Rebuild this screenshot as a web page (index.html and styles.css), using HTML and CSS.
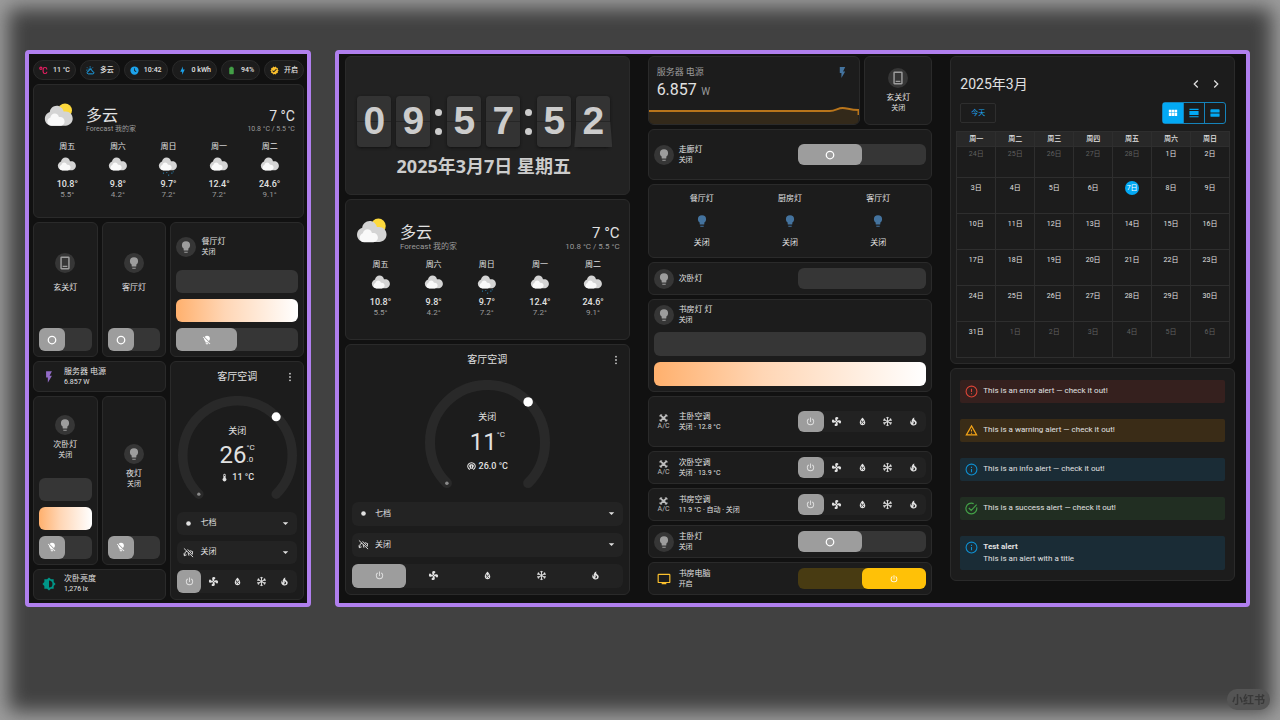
FILE: index.html
```html
<!DOCTYPE html>
<html lang="zh-CN">
<head>
<meta charset="utf-8">
<meta name="viewport" content="width=device-width, initial-scale=1">
<title>Dashboard</title>
<link rel="stylesheet" href="styles.css">
</head>
<body>
<svg class="sprite" aria-hidden="true">
  <symbol id="bulb" viewBox="0 0 24 24"><path d="M12,2A7,7 0 0,0 5,9C5,11.38 6.19,13.47 8,14.74V17A1,1 0 0,0 9,18H15A1,1 0 0,0 16,17V14.74C17.81,13.47 19,11.38 19,9A7,7 0 0,0 12,2M9,21A1,1 0 0,0 10,22H14A1,1 0 0,0 15,21V20H9V21Z"/></symbol>
  <symbol id="bulb-off" viewBox="0 0 24 24"><path d="M12,2C9.76,2 7.78,3.05 6.5,4.68L16.31,14.5C17.94,13.21 19,11.24 19,9A7,7 0 0,0 12,2M3.28,4L2,5.27L5.04,8.3C5,8.53 5,8.76 5,9C5,11.38 6.19,13.47 8,14.74V17A1,1 0 0,0 9,18H14.73L18.73,22L20,20.72L3.28,4M9,20V21A1,1 0 0,0 10,22H14A1,1 0 0,0 15,21V20H9Z"/></symbol>
  <symbol id="power" viewBox="0 0 24 24"><path d="M16.56,5.44L15.11,6.89C16.84,7.94 18,9.83 18,12A6,6 0 0,1 12,18A6,6 0 0,1 6,12C6,9.83 7.16,7.94 8.88,6.88L7.44,5.44C5.36,6.88 4,9.28 4,12A8,8 0 0,0 12,20A8,8 0 0,0 20,12C20,9.28 18.64,6.88 16.56,5.44M13,3H11V13H13"/></symbol>
  <symbol id="ring" viewBox="0 0 24 24"><circle cx="12" cy="12" r="9" fill="none" stroke="currentColor" stroke-width="3"/></symbol>
  <symbol id="fan" viewBox="0 0 24 24"><path d="M12,11A1,1 0 0,0 11,12A1,1 0 0,0 12,13A1,1 0 0,0 13,12A1,1 0 0,0 12,11M12.5,2C17,2 17.11,5.57 14.75,6.75C13.76,7.24 13.32,8.29 13.13,9.22C13.61,9.42 14.03,9.73 14.35,10.13C18.05,8.13 22.03,8.92 22.03,12.5C22.03,17 18.46,17.1 17.28,14.73C16.78,13.74 15.72,13.3 14.79,13.11C14.59,13.59 14.28,14 13.88,14.34C15.87,18.03 15.08,22 11.5,22C7,22 6.91,18.42 9.27,17.24C10.25,16.75 10.69,15.71 10.89,14.79C10.4,14.59 9.97,14.27 9.65,13.87C5.96,15.85 2,15.07 2,11.5C2,7 5.56,6.89 6.74,9.26C7.24,10.25 8.29,10.68 9.22,10.87C9.41,10.39 9.73,9.97 10.14,9.65C8.15,5.96 8.94,2 12.5,2Z"/></symbol>
  <symbol id="drop" viewBox="0 0 24 24"><path d="M12,3.25C12,3.25 6,10 6,14C6,17.32 8.69,20 12,20A6,6 0 0,0 18,14C18,10 12,3.25 12,3.25M14.47,9.97L15.53,11.03L9.53,17.03L8.47,15.97M9.75,10A1.25,1.25 0 0,1 11,11.25A1.25,1.25 0 0,1 9.75,12.5A1.25,1.25 0 0,1 8.5,11.25A1.25,1.25 0 0,1 9.75,10M14.25,14.5A1.25,1.25 0 0,1 15.5,15.75A1.25,1.25 0 0,1 14.25,17A1.25,1.25 0 0,1 13,15.75A1.25,1.25 0 0,1 14.25,14.5Z" fill-rule="evenodd"/></symbol>
  <symbol id="snow" viewBox="0 0 24 24"><g fill="none" stroke="currentColor" stroke-width="2"><path d="M12 12V2M9.500 3L12 6L14.500 3"/><path transform="rotate(60 12 12)" d="M12 12V2M9.500 3L12 6L14.500 3"/><path transform="rotate(120 12 12)" d="M12 12V2M9.500 3L12 6L14.500 3"/><path transform="rotate(180 12 12)" d="M12 12V2M9.500 3L12 6L14.500 3"/><path transform="rotate(240 12 12)" d="M12 12V2M9.500 3L12 6L14.500 3"/><path transform="rotate(300 12 12)" d="M12 12V2M9.500 3L12 6L14.500 3"/></g></symbol>
  <symbol id="fire" viewBox="0 0 24 24"><path d="M17.66 11.2C17.43 10.9 17.15 10.64 16.89 10.38C16.22 9.78 15.46 9.35 14.82 8.72C13.33 7.26 13 4.85 13.95 3C13 3.23 12.17 3.75 11.46 4.32C8.87 6.4 7.85 10.07 9.07 13.22C9.11 13.32 9.15 13.42 9.15 13.55C9.15 13.77 9 13.97 8.8 14.05C8.57 14.15 8.33 14.09 8.14 13.93C8.08 13.88 8.04 13.83 8 13.76C6.87 12.33 6.69 10.28 7.45 8.64C5.78 10 4.87 12.3 5 14.47C5.06 14.97 5.12 15.47 5.29 15.97C5.43 16.57 5.7 17.17 6 17.7C7.08 19.43 8.95 20.67 10.96 20.92C13.1 21.19 15.39 20.8 17.03 19.32C18.86 17.66 19.5 15 18.56 12.72L18.43 12.46C18.22 12 17.66 11.2 17.66 11.2M14.5 17.5C14.22 17.74 13.76 18 13.4 18.1C12.28 18.5 11.16 17.94 10.5 17.28C11.69 17 12.4 16.12 12.61 15.23C12.78 14.43 12.46 13.77 12.33 13C12.21 12.26 12.23 11.63 12.5 10.94C12.69 11.32 12.89 11.7 13.13 12C13.9 13 15.11 13.44 15.37 14.8C15.41 14.94 15.43 15.08 15.43 15.23C15.46 16.05 15.1 16.95 14.5 17.5H14.5Z"/></symbol>
  <symbol id="flash" viewBox="0 0 24 24"><path d="M7,2V13H10V22L17,10H13L17,2H7Z"/></symbol>
  <symbol id="bolt" viewBox="0 0 24 24"><path d="M11 15H6L13 1V9H18L11 23V15Z"/></symbol>
  <symbol id="tablet" viewBox="0 0 24 24"><path fill-rule="evenodd" d="M6 1H18A2 2 0 0 1 20 3V21A2 2 0 0 1 18 23H6A2 2 0 0 1 4 21V3A2 2 0 0 1 6 1M6.500 3.500V20.500H17.500V3.500M8 16.500H16V19H8Z"/></symbol>
  <symbol id="tv" viewBox="0 0 24 24"><path d="M21,17H3V5H21M21,3H3A2,2 0 0,0 1,5V17A2,2 0 0,0 3,19H8V21H16V19H21A2,2 0 0,0 23,17V5A2,2 0 0,0 21,3Z" fill-rule="evenodd"/></symbol>
  <symbol id="bright" viewBox="0 0 24 24"><path d="M12,18V6A6,6 0 0,1 18,12A6,6 0 0,1 12,18M20,15.31L23.31,12L20,8.69V4H15.31L12,0.69L8.69,4H4V8.69L0.69,12L4,15.31V20H8.69L12,23.31L15.31,20H20V15.31Z" fill-rule="evenodd"/></symbol>
  <symbol id="celsius" viewBox="0 0 24 24"><g fill="none" stroke="currentColor" stroke-width="3"><circle cx="5" cy="6" r="3"/><path d="M21 9A5 5 0 0 0 11 9V15A5 5 0 0 0 21 15"/></g></symbol>
  <symbol id="part-cloud" viewBox="0 0 24 24"><g fill="none" stroke="currentColor" stroke-width="2.600"><path d="M6 21H18A3 3 0 0 0 18 15H17A5 5 0 0 0 7 14A3.500 3.500 0 0 0 6 21ZM7 11A5 5 0 0 1 15 8.500M11 1V4M3 4L5 6M1 11H4M18 4L16 6"/></g></symbol>
  <symbol id="clock" viewBox="0 0 24 24"><path fill-rule="evenodd" d="M12 1A11 11 0 1 0 12 23A11 11 0 1 0 12 1M11 6H13V11.500L17 14L16 16L11 13Z"/></symbol>
  <symbol id="battery" viewBox="0 0 24 24"><path d="M16 4H15V2H9V4H8A2 2 0 0 0 6 6V20A2 2 0 0 0 8 22H16A2 2 0 0 0 18 20V6A2 2 0 0 0 16 4Z"/></symbol>
  <symbol id="seal" viewBox="0 0 24 24"><path fill-rule="evenodd" d="M23 12L20.560 9.220L20.900 5.540L17.290 4.720L15.400 1.540L12 3L8.600 1.540L6.710 4.720L3.100 5.530L3.440 9.210L1 12L3.440 14.780L3.100 18.470L6.710 19.290L8.600 22.470L12 21L15.400 22.460L17.290 19.280L20.900 18.460L20.560 14.780L23 12M10 17L6 13L7.410 11.590L10 14.170L16.590 7.580L18 9L10 17Z"/></symbol>
  <symbol id="thermo" viewBox="0 0 24 24"><path d="M15 13V5A3 3 0 0 0 9 5V13A5 5 0 1 0 15 13M12 4A1 1 0 0 1 13 5V8H11V5A1 1 0 0 1 12 4Z" fill-rule="evenodd"/></symbol>
  <symbol id="target" viewBox="0 0 24 24"><path d="M8 20A10 9.500 0 1 1 16 20" fill="none" stroke="currentColor" stroke-width="2.800"/><path d="M12 6A5 5 0 0 1 16 15V18H8V15A5 5 0 0 1 12 6M11 9V15H13V9Z" fill-rule="evenodd"/></symbol>
  <symbol id="dot" viewBox="0 0 24 24"><circle cx="12" cy="12" r="5"/></symbol>
  <symbol id="swing-off" viewBox="0 0 24 24"><path d="M2 3L22 22M3 19L5 11L9 9M3 19L2 14M3 19L8 17M10 5L19 15M15 8L21 10L20 17M11 12L13 19" fill="none" stroke="currentColor" stroke-width="2"/></symbol>
  <symbol id="caret" viewBox="0 0 24 24"><path d="M6 9H18L12 15Z"/></symbol>
  <symbol id="dots" viewBox="0 0 24 24"><circle cx="12" cy="4" r="2.200"/><circle cx="12" cy="12" r="2.200"/><circle cx="12" cy="20" r="2.200"/></symbol>
  <symbol id="cross-fan" viewBox="0 0 24 18"><path d="M12 9L4 2M12 9L20 2M12 9L4 16M12 9L20 16" stroke="currentColor" stroke-width="4" fill="none"/><path d="M3 5L9 1M15 1L21 5M3 13L9 17M15 17L21 13" stroke="currentColor" stroke-width="2"/></symbol>
  <symbol id="left" viewBox="0 0 24 24"><path d="M15.500 5L8.500 12L15.500 19" fill="none" stroke="currentColor" stroke-width="2.500"/></symbol>
  <symbol id="right" viewBox="0 0 24 24"><path d="M8.500 5L15.500 12L8.500 19" fill="none" stroke="currentColor" stroke-width="2.500"/></symbol>
  <symbol id="month" viewBox="0 0 24 24"><path d="M2 4H8V11H2ZM9 4H15V11H9ZM16 4H22V11H16ZM2 12H8V19H2ZM9 12H15V19H9ZM16 12H22V19H16Z"/></symbol>
  <symbol id="week" viewBox="0 0 24 24"><path d="M1 2H23V4.500H1ZM1 7H23V17H1ZM1 19.500H23V22H1Z"/></symbol>
  <symbol id="day" viewBox="0 0 24 24"><path d="M3 3H21A2 2 0 0 1 23 5V11H1V5A2 2 0 0 1 3 3M1 13H23V19A2 2 0 0 1 21 21H3A2 2 0 0 1 1 19Z"/></symbol>
  <symbol id="a-error" viewBox="0 0 24 24"><circle cx="12" cy="12" r="10" fill="none" stroke="currentColor" stroke-width="2"/><path d="M11 7H13V13H11ZM11 15H13V17H11Z"/></symbol>
  <symbol id="a-warning" viewBox="0 0 24 24"><path d="M12 3.500L21.500 20H2.500Z" fill="none" stroke="currentColor" stroke-width="2.200"/><path d="M11 10H13V14H11ZM11 16H13V18H11Z"/></symbol>
  <symbol id="a-info" viewBox="0 0 24 24"><circle cx="12" cy="12" r="10" fill="none" stroke="currentColor" stroke-width="2"/><path d="M11 7H13V9H11ZM11 11H13V17H11Z"/></symbol>
  <symbol id="a-success" viewBox="0 0 24 24"><path d="M21.500 10A10 10 0 1 1 16 3M7 11L11.500 15.500L21.500 5" fill="none" stroke="currentColor" stroke-width="2.200"/></symbol>
  <symbol id="cloud" viewBox="0 0 17 17"><path fill="#d4d4d4" d="m 3.8863,5.035 c -0.54892,0.16898 -1.04,0.46637 -1.4372,0.8636 -0.63077,0.63041 -1.0206,1.4933 -1.0206,2.455 0,1.9251 1.5589,3.4682 3.4837,3.4682 h 6.9688 c 1.9251,0 3.484,-1.5981 3.484,-3.5232 0,-1.9251 -1.5589,-3.5232 -3.484,-3.5232 h -1.0834 c -0.25294,-1.6916 -1.6986,-2.9083 -3.4463,-2.9083 -1.7995,0 -3.2805,1.4153 -3.465,3.1679"/><path fill="#f9f9f9" d="m 4.1996,7.6995 c -0.33902,0.10407 -0.64276,0.28787 -0.88794,0.5334 -0.39017,0.38982 -0.63147,0.92322 -0.63147,1.5176 0,1.1896 0.96414,2.1431 2.1537,2.1431 h 4.3071 c 1.1896,0 2.153,-0.98742 2.153,-2.1777 0,-1.1896 -0.96344,-2.1777 -2.153,-2.1777 h -0.66992 c -0.15593,-1.0449 -1.0499,-1.7974 -2.1297,-1.7974 -1.112,0 -2.0274,0.87524 -2.1417,1.9586"/></symbol>
  <symbol id="sun-cloud" viewBox="0 0 17 17"><circle cx="11.500" cy="4.200" r="3.500" fill="#fdd93c"/><use href="#cloud"/></symbol>
  <symbol id="rain-cloud" viewBox="0 0 17 17"><use href="#cloud"/><g fill="#2b8fc4"><circle cx="5" cy="14" r=".5"/><circle cx="7.600" cy="13.500" r=".4"/><circle cx="9" cy="15.500" r=".5"/><circle cx="11.500" cy="14" r=".5"/><circle cx="12.500" cy="13" r=".4"/></g></symbol>
</svg>

<main class="boards">
<section class="panel phone">
  <div class="chips">
    <span class="chip"><svg class="pink"><use href="#celsius"/></svg>11 °C</span>
    <span class="chip"><svg class="blue"><use href="#part-cloud"/></svg>多云</span>
    <span class="chip"><svg class="blue"><use href="#clock"/></svg>10:42</span>
    <span class="chip"><svg class="blue"><use href="#bolt"/></svg>0 kWh</span>
    <span class="chip"><svg class="green"><use href="#battery"/></svg>94%</span>
    <span class="chip"><svg class="amber"><use href="#seal"/></svg>开启</span>
  </div>

  <article class="card weather small">
    <header class="now">
      <svg><use href="#sun-cloud"/></svg>
      <div class="place"><h2>多云</h2><p>Forecast 我的家</p></div>
      <div class="temp"><h2>7 °C</h2><p>10.8 °C / 5.5 °C</p></div>
    </header>
    <ul class="forecast">
      <li><span>周五</span><svg><use href="#cloud"/></svg><b>10.8°</b><small>5.5°</small></li>
      <li><span>周六</span><svg><use href="#cloud"/></svg><b>9.8°</b><small>4.2°</small></li>
      <li><span>周日</span><svg><use href="#rain-cloud"/></svg><b>9.7°</b><small>7.2°</small></li>
      <li><span>周一</span><svg><use href="#cloud"/></svg><b>12.4°</b><small>7.2°</small></li>
      <li><span>周二</span><svg><use href="#cloud"/></svg><b>24.6°</b><small>9.1°</small></li>
    </ul>
  </article>

  <div class="halves">
    <div class="pair">
      <article class="card tile">
        <div class="info stacked"><span class="badge"><svg><use href="#tablet"/></svg></span><div class="text"><h3>玄关灯</h3></div></div>
        <button class="switch" role="switch" aria-checked="false" aria-label="玄关灯"><span><svg><use href="#ring"/></svg></span></button>
      </article>
      <article class="card tile">
        <div class="info stacked"><span class="badge"><svg><use href="#bulb"/></svg></span><div class="text"><h3>客厅灯</h3></div></div>
        <button class="switch" role="switch" aria-checked="false" aria-label="客厅灯"><span><svg><use href="#ring"/></svg></span></button>
      </article>
    </div>
    <article class="card tile top-tile">
      <div class="info"><span class="badge"><svg><use href="#bulb"/></svg></span><div class="text"><h3>餐厅灯</h3><p>关闭</p></div></div>
      <input type="range" class="slider" value="0" aria-label="餐厅灯亮度">
      <input type="range" class="slider warm" value="50" aria-label="餐厅灯色温">
      <button class="switch" role="switch" aria-checked="false" aria-label="餐厅灯"><span><svg><use href="#bulb-off"/></svg></span></button>
    </article>
  </div>

  <div class="halves">
    <div class="stack">
      <article class="card row"><div class="info"><span class="badge bare purple"><svg><use href="#flash"/></svg></span><div class="text"><h3>服务器 电源</h3><p>6.857 W</p></div></div></article>
      <div class="pair fill">
        <article class="card tile">
          <div class="info stacked"><span class="badge"><svg><use href="#bulb"/></svg></span><div class="text"><h3>次卧灯</h3><p>关闭</p></div></div>
          <input type="range" class="slider" value="0" aria-label="次卧灯亮度">
          <input type="range" class="slider warm" value="50" aria-label="次卧灯色温">
          <button class="switch" role="switch" aria-checked="false" aria-label="次卧灯"><span><svg><use href="#bulb-off"/></svg></span></button>
        </article>
        <article class="card tile">
          <div class="info stacked"><span class="badge"><svg><use href="#bulb"/></svg></span><div class="text"><h3>夜灯</h3><p>关闭</p></div></div>
          <button class="switch" role="switch" aria-checked="false" aria-label="夜灯"><span><svg><use href="#bulb-off"/></svg></span></button>
        </article>
      </div>
      <article class="card row"><div class="info"><span class="badge bare teal"><svg><use href="#bright"/></svg></span><div class="text"><h3>次卧亮度</h3><p>1,276 lx</p></div></div></article>
    </div>
    <article class="card climate small">
      <header><h2>客厅空调</h2><button class="more" aria-label="更多"><svg><use href="#dots"/></svg></button></header>
      <div class="dial">
        <svg class="arc" viewBox="0 0 100 87"><path d="M17.500 82.500A46 46 0 1 1 82.500 82.500"/><circle class="start" cx="17.500" cy="82.500" r="1.400"/><circle class="knob" cx="82.500" cy="17.500" r="3.800"/></svg>
        <div class="reading"><span>关闭</span><div class="big"><strong>26</strong><span class="unit"><i>°C</i><i>.0</i></span></div><p><svg><use href="#thermo"/></svg>11 °C</p></div>
      </div>
      <label class="pick"><svg><use href="#dot"/></svg><select aria-label="风速"><option>七档</option></select><svg class="caret"><use href="#caret"/></svg></label>
      <label class="pick"><svg class="wide"><use href="#swing-off"/></svg><select aria-label="摆动"><option>关闭</option></select><svg class="caret"><use href="#caret"/></svg></label>
      <div class="modes">
        <button class="on" aria-label="关闭"><svg><use href="#power"/></svg></button><button aria-label="送风"><svg><use href="#fan"/></svg></button><button aria-label="除湿"><svg><use href="#drop"/></svg></button><button aria-label="制冷"><svg><use href="#snow"/></svg></button><button aria-label="制热"><svg><use href="#fire"/></svg></button>
      </div>
    </article>
  </div>
</section>

<section class="panel desk">
  <div class="column">
    <article class="card clock">
      <div class="flip" role="timer" aria-label="09:57:52">
        <span class="digit">0</span><span class="digit">9</span><span class="colon"></span><span class="digit">5</span><span class="digit">7</span><span class="colon"></span><span class="digit">5</span><span class="digit turning">2</span>
      </div>
      <p class="date">2025年3月7日 星期五</p>
    </article>

    <article class="card weather">
      <header class="now">
        <svg><use href="#sun-cloud"/></svg>
        <div class="place"><h2>多云</h2><p>Forecast 我的家</p></div>
        <div class="temp"><h2>7 °C</h2><p>10.8 °C / 5.5 °C</p></div>
      </header>
      <ul class="forecast">
        <li><span>周五</span><svg><use href="#cloud"/></svg><b>10.8°</b><small>5.5°</small></li>
        <li><span>周六</span><svg><use href="#cloud"/></svg><b>9.8°</b><small>4.2°</small></li>
        <li><span>周日</span><svg><use href="#rain-cloud"/></svg><b>9.7°</b><small>7.2°</small></li>
        <li><span>周一</span><svg><use href="#cloud"/></svg><b>12.4°</b><small>7.2°</small></li>
        <li><span>周二</span><svg><use href="#cloud"/></svg><b>24.6°</b><small>9.1°</small></li>
      </ul>
    </article>

    <article class="card climate">
      <header><h2>客厅空调</h2><button class="more" aria-label="更多"><svg><use href="#dots"/></svg></button></header>
      <div class="dial">
        <svg class="arc" viewBox="0 0 100 87"><path d="M17.500 82.500A46 46 0 1 1 82.500 82.500"/><circle class="start" cx="17.500" cy="82.500" r="1.400"/><circle class="knob" cx="82.500" cy="17.500" r="3.800"/></svg>
        <div class="reading"><span>关闭</span><div class="big"><strong>11</strong><span class="unit"><i>°C</i></span></div><p><svg><use href="#target"/></svg>26.0 °C</p></div>
      </div>
      <label class="pick"><svg><use href="#dot"/></svg><select aria-label="风速"><option>七档</option></select><svg class="caret"><use href="#caret"/></svg></label>
      <label class="pick"><svg class="wide"><use href="#swing-off"/></svg><select aria-label="摆动"><option>关闭</option></select><svg class="caret"><use href="#caret"/></svg></label>
      <div class="modes">
        <button class="on" aria-label="关闭"><svg><use href="#power"/></svg></button><button aria-label="送风"><svg><use href="#fan"/></svg></button><button aria-label="除湿"><svg><use href="#drop"/></svg></button><button aria-label="制冷"><svg><use href="#snow"/></svg></button><button aria-label="制热"><svg><use href="#fire"/></svg></button>
      </div>
    </article>
  </div>

  <div class="column">
    <div class="sensor-row">
      <article class="card sensor">
        <header><h3>服务器 电源</h3><svg><use href="#flash"/></svg></header>
        <p><strong>6.857</strong> W</p>
        <svg class="graph" viewBox="0 0 212 18" preserveAspectRatio="none"><path class="area" d="M0 5H182C188 5 190 2 195 2C200 2 202 4 211 4V18H0Z"/><path class="line" d="M0 5H182C188 5 190 2 195 2C200 2 202 4 211 4V9"/></svg>
      </article>
      <article class="card tile"><div class="info stacked"><span class="badge"><svg><use href="#tablet"/></svg></span><div class="text"><h3>玄关灯</h3><p>关闭</p></div></div></article>
    </div>

    <article class="card row tall">
      <div class="info"><span class="badge"><svg><use href="#bulb"/></svg></span><div class="text"><h3>走廊灯</h3><p>关闭</p></div></div>
      <button class="switch" role="switch" aria-checked="false" aria-label="走廊灯"><span><svg><use href="#ring"/></svg></span></button>
    </article>

    <article class="card glance">
      <button><span>餐厅灯</span><svg><use href="#bulb"/></svg><span>关闭</span></button>
      <button><span>厨房灯</span><svg><use href="#bulb"/></svg><span>关闭</span></button>
      <button><span>客厅灯</span><svg><use href="#bulb"/></svg><span>关闭</span></button>
    </article>

    <article class="card row">
      <div class="info"><span class="badge"><svg><use href="#bulb"/></svg></span><div class="text"><h3>次卧灯</h3></div></div>
      <input type="range" class="slider" value="0" aria-label="次卧灯亮度">
    </article>

    <article class="card tile study">
      <div class="info"><span class="badge"><svg><use href="#bulb"/></svg></span><div class="text"><h3>书房灯 灯</h3><p>关闭</p></div></div>
      <input type="range" class="slider" value="0" aria-label="书房灯亮度">
      <input type="range" class="slider warm" value="50" aria-label="书房灯色温">
    </article>

    <article class="card row tall">
      <div class="info"><span class="badge ac"><svg><use href="#cross-fan"/></svg>A/C</span><div class="text"><h3>主卧空调</h3><p>关闭 · 12.8 °C</p></div></div>
      <div class="modes"><button class="on" aria-label="关闭"><svg><use href="#power"/></svg></button><button aria-label="送风"><svg><use href="#fan"/></svg></button><button aria-label="除湿"><svg><use href="#drop"/></svg></button><button aria-label="制冷"><svg><use href="#snow"/></svg></button><button aria-label="制热"><svg><use href="#fire"/></svg></button></div>
    </article>
    <article class="card row">
      <div class="info"><span class="badge ac"><svg><use href="#cross-fan"/></svg>A/C</span><div class="text"><h3>次卧空调</h3><p>关闭 · 13.9 °C</p></div></div>
      <div class="modes"><button class="on" aria-label="关闭"><svg><use href="#power"/></svg></button><button aria-label="送风"><svg><use href="#fan"/></svg></button><button aria-label="除湿"><svg><use href="#drop"/></svg></button><button aria-label="制冷"><svg><use href="#snow"/></svg></button><button aria-label="制热"><svg><use href="#fire"/></svg></button></div>
    </article>
    <article class="card row">
      <div class="info"><span class="badge ac"><svg><use href="#cross-fan"/></svg>A/C</span><div class="text"><h3>书房空调</h3><p>11.9 °C · 自动 · 关闭</p></div></div>
      <div class="modes"><button class="on" aria-label="关闭"><svg><use href="#power"/></svg></button><button aria-label="送风"><svg><use href="#fan"/></svg></button><button aria-label="除湿"><svg><use href="#drop"/></svg></button><button aria-label="制冷"><svg><use href="#snow"/></svg></button><button aria-label="制热"><svg><use href="#fire"/></svg></button></div>
    </article>
    <article class="card row">
      <div class="info"><span class="badge"><svg><use href="#bulb"/></svg></span><div class="text"><h3>主卧灯</h3><p>关闭</p></div></div>
      <button class="switch" role="switch" aria-checked="false" aria-label="主卧灯"><span><svg><use href="#ring"/></svg></span></button>
    </article>
    <article class="card row">
      <div class="info"><span class="badge bare amber"><svg><use href="#tv"/></svg></span><div class="text"><h3>书房电脑</h3><p>开启</p></div></div>
      <button class="switch lit" role="switch" aria-checked="true" aria-label="书房电脑"><span><svg><use href="#power"/></svg></span></button>
    </article>
  </div>

  <div class="column">
    <article class="card calendar">
      <header><h2>2025年3月</h2><nav><button aria-label="上个月"><svg><use href="#left"/></svg></button><button aria-label="下个月"><svg><use href="#right"/></svg></button></nav></header>
      <div class="tools"><button class="today">今天</button><div class="views"><button class="on" aria-label="月"><svg><use href="#month"/></svg></button><button aria-label="周"><svg><use href="#week"/></svg></button><button aria-label="日"><svg><use href="#day"/></svg></button></div></div>
      <table>
        <thead><tr><th>周一</th><th>周二</th><th>周三</th><th>周四</th><th>周五</th><th>周六</th><th>周日</th></tr></thead>
        <tbody>
          <tr><td class="off">24日</td><td class="off">25日</td><td class="off">26日</td><td class="off">27日</td><td class="off">28日</td><td>1日</td><td>2日</td></tr>
          <tr><td>3日</td><td>4日</td><td>5日</td><td>6日</td><td><span class="current">7日</span></td><td>8日</td><td>9日</td></tr>
          <tr><td>10日</td><td>11日</td><td>12日</td><td>13日</td><td>14日</td><td>15日</td><td>16日</td></tr>
          <tr><td>17日</td><td>18日</td><td>19日</td><td>20日</td><td>21日</td><td>22日</td><td>23日</td></tr>
          <tr><td>24日</td><td>25日</td><td>26日</td><td>27日</td><td>28日</td><td>29日</td><td>30日</td></tr>
          <tr><td>31日</td><td class="off">1日</td><td class="off">2日</td><td class="off">3日</td><td class="off">4日</td><td class="off">5日</td><td class="off">6日</td></tr>
        </tbody>
      </table>
    </article>

    <article class="card alerts">
      <div class="alert error" role="alert"><svg><use href="#a-error"/></svg><p>This is an error alert — check it out!</p></div>
      <div class="alert warning" role="alert"><svg><use href="#a-warning"/></svg><p>This is a warning alert — check it out!</p></div>
      <div class="alert note" role="alert"><svg><use href="#a-info"/></svg><p>This is an info alert — check it out!</p></div>
      <div class="alert success" role="alert"><svg><use href="#a-success"/></svg><p>This is a success alert — check it out!</p></div>
      <div class="alert note" role="alert"><svg><use href="#a-info"/></svg><p><b>Test alert</b><br>This is an alert with a title</p></div>
    </article>
  </div>
</section>
</main>
<span class="watermark">小红书</span>
</body>
</html>
```
FILE: styles.css
```css
* { box-sizing: border-box; margin: 0; padding: 0; }

body {
  min-height: 100vh;
  padding: 50px 30px 40px 25px;
  background: #414141;
  box-shadow: inset 0 0 20px 8px #a0a0a0;
  color: #e1e1e1;
  font: 8px/10px Roboto, "Noto Sans CJK SC", sans-serif;
}

svg { display: block; fill: currentColor; flex: none; }
.sprite { position: absolute; width: 0; height: 0; }
button, select { font: inherit; color: inherit; background: none; border: 0; cursor: pointer; }
h2, h3 { font-weight: 400; }
ul { list-style: none; }

.pink { color: #e91e63; }
.blue { color: #1ca3ec; }
.green { color: #43a047; }
.amber { color: #fbc02d; }

.boards {
  display: grid;
  grid-template-columns: 5fr 16fr;
  gap: 24px;
}

.panel {
  border: 4px solid #b07fee;
  border-radius: 4px;
  background: #111;
}

.phone {
  display: flex;
  flex-direction: column;
  gap: 4px;
  padding: 6px 3px 3px 4px;
}

.desk {
  display: grid;
  grid-template-columns: repeat(3, minmax(0, 1fr));
  align-items: start;
  gap: 18px;
  padding: 2px 11px 2px 6px;
}

.column, .stack { display: flex; flex-direction: column; gap: 4px; min-width: 0; }

.card {
  border: 1px solid #2a2a2a;
  border-radius: 6px;
  background: #1c1c1c;
  min-width: 0;
}

/* Chips */
.chips { display: flex; gap: 4px; }
.chip {
  display: flex;
  flex: 1 1 auto;
  align-items: center;
  justify-content: center;
  gap: 5px;
  height: 20px;
  border: 1px solid #2a2a2a;
  border-radius: 10px;
  background: #1c1c1c;
  font-size: 7px;
  font-weight: 500;
  white-space: nowrap;
}
.chip svg { width: 9px; height: 9px; }

/* Weather */
.weather { padding: 17px 9px 20px 8px; min-height: 141px; }
.weather.small { padding: 17px 8px 16px; min-height: 134px; }
.now { display: flex; align-items: center; gap: 10px; padding-bottom: 7px; }
.small .now { padding-bottom: 6px; }
.now > svg { width: 36px; height: 36px; }
.small .now > svg { width: 34px; height: 34px; }
.now > div { padding-top: 4px; }
.small .now > div { padding-top: 2px; }
.now h2 { font-size: 16px; line-height: 18px; }
.temp h2 { font-size: 15px; }
.small .temp h2 { font-size: 14px; }
.now p { color: #9b9b9b; line-height: 9px; }
.small .now p { font-size: 7px; }
.place { flex: 1; }
.temp { text-align: right; }
.forecast { display: grid; grid-template-columns: repeat(5, 1fr); }
.forecast li { display: flex; flex-direction: column; align-items: center; }
.forecast svg { width: 22px; height: 22px; margin: 3px 0 1px; }
.forecast b { font-size: 9px; line-height: 12px; font-weight: 500; }
.forecast small { font-size: 8px; color: #9b9b9b; }

/* Tiles */
.halves, .pair { display: grid; grid-template-columns: repeat(2, minmax(0, 1fr)); gap: 4px; }
.fill { flex: 1; }
.tile { display: flex; flex-direction: column; gap: 6px; padding: 0 5px 5px; }
.halves > .pair, .top-tile { min-height: 135px; }
.info { display: flex; flex: 1; align-items: center; gap: 5px; min-width: 0; }
.stacked { flex-direction: column; justify-content: center; text-align: center; margin-bottom: -6px; }
.top-tile .info { margin-bottom: -6px; }
.badge {
  display: grid;
  place-items: center;
  flex: none;
  width: 20px;
  height: 20px;
  border-radius: 50%;
  background: #363636;
  color: #9d9d9d;
}
.badge svg { width: 14px; height: 14px; }
.bare { background: none; }
.purple { color: #926bc7; }
.teal { color: #009688; }
.bare.amber { color: #fbc02d; }
.ac { align-content: center; background: none; color: #bdbdbd; font-size: 7px; line-height: 8px; }
.ac svg { width: 11px; height: 8px; }
.text { display: flex; flex-direction: column; justify-content: center; min-height: 20px; }
.text h3 { font-size: 8px; line-height: 10px; }
.text p { font-size: 7px; line-height: 10px; }

.row { display: flex; align-items: center; min-height: 33px; padding: 5px; }
.phone .row { min-height: 31px; padding: 4px 5px; }
.desk .row > :last-child { width: 47%; flex: none; height: 21px; }
.desk .tall { min-height: 51px; }

.switch {
  display: grid;
  grid-template-columns: 1fr 1fr;
  width: 100%;
  height: 23px;
  border-radius: 6px;
  background: #363636;
}
.switch span { display: grid; place-items: center; height: 100%; border-radius: 6px; background: #9d9d9d; color: #fff; }
.switch svg { width: 10px; height: 10px; }
.lit { background: #483b12; }
.lit span { grid-column: 2; background: #ffc107; }

.slider {
  display: block;
  appearance: none;
  width: 100%;
  height: 23px;
  border-radius: 6px;
  background: #363636;
}
.slider::-webkit-slider-thumb { appearance: none; width: 1px; height: 1px; }
.warm { background: linear-gradient(90deg, #ffb06d, #ffd6b5 40%, #fff); }

/* Climate */
.climate { padding: 8px 6px 6px; }
.climate header { display: grid; grid-template-columns: 1fr auto 1fr; align-items: center; }
.climate h2 { grid-column: 2; font-size: 10px; line-height: 14px; }
.more { justify-self: end; padding: 0 2px; }
.more svg { width: 10px; height: 10px; color: #c8c8c8; }
.dial { display: grid; justify-content: center; margin: 13px 0; }
.small .dial { margin: 12px 0; }
.arc, .reading { grid-area: 1 / 1; }
.arc { width: 125px; }
.small .arc { width: 119px; }
.arc path { fill: none; stroke: #292929; stroke-width: 8; stroke-linecap: round; }
.start { fill: #8a8a8a; }
.knob { fill: #fff; }
.reading { display: flex; flex-direction: column; align-items: center; padding-top: 31px; font-size: 9px; line-height: 12px; }
.small .reading { padding-top: 29px; }
.big { display: flex; margin: 6px 0 5px; }
.small .big { margin: 5px 0 3px; }
.big strong { font-size: 24px; line-height: 26px; font-weight: 400; }
.unit { display: flex; flex-direction: column; font-size: 8px; line-height: 12px; }
.unit i { font-style: normal; }
.reading p { display: flex; align-items: center; gap: 3px; font-weight: 500; }
.reading p svg { width: 9px; height: 9px; }

.pick {
  display: flex;
  align-items: center;
  gap: 6px;
  height: 24px;
  margin-bottom: 7px;
  padding: 0 6px;
  border-radius: 6px;
  background: #232323;
}
.pick svg { width: 11px; height: 11px; }
.pick select { flex: 1; min-width: 0; appearance: none; font-size: 8px; }
.modes { display: grid; grid-template-columns: repeat(5, 1fr); height: 24px; border-radius: 6px; background: #222; }
.modes button { display: grid; place-items: center; border-radius: 6px; }
.modes svg { width: 11px; height: 11px; }
.modes .on { background: #9d9d9d; }
.small .pick { height: 23px; margin-bottom: 6px; }
.small .modes { height: 23px; }

/* Clock */
.clock { min-height: 139px; padding: 39px 10px 0; background: #222; }
.flip { display: flex; gap: 5px; justify-content: center; padding-right: 7px; }
.digit {
  position: relative;
  width: 34px;
  height: 51px;
  border-radius: 4px;
  background: linear-gradient(#333 25px, #262626 25px, #262626 26px, #333 26px);
  box-shadow: 0 1px 3px #111;
  color: #ccc;
  font: 700 39px/50px "Liberation Sans", sans-serif;
  text-align: center;
}
.turning { z-index: 0; }
.turning::after {
  content: "";
  position: absolute;
  z-index: -1;
  inset: 26px -2px 0;
  background: #353535;
  clip-path: polygon(2px 0, 36px 0, 100% 100%, 0 100%);
}
.colon { display: flex; flex-direction: column; justify-content: center; gap: 12px; width: 7px; }
.colon::before, .colon::after { content: ""; height: 7px; border-radius: 50%; background: #ccc; }
.date { margin-top: 6px; padding-right: 7px; color: #ccc; font: 700 18px/26px "Noto Sans", "Noto Sans CJK SC", sans-serif; text-align: center; }

/* Middle column */
.sensor-row { display: grid; grid-template-columns: 212fr 68fr; gap: 4px; min-height: 69px; }
.sensor { display: flex; flex-direction: column; overflow: hidden; }
.sensor header { display: flex; justify-content: space-between; align-items: center; padding: 9px 10px 0 8px; color: #9b9b9b; }
.sensor h3 { font-size: 9px; line-height: 13px; }
.sensor header svg { width: 13px; height: 13px; color: #44739e; }
.sensor p { padding-left: 8px; color: #9b9b9b; font-size: 10px; line-height: 22px; }
.sensor strong { margin-right: 2px; color: #e1e1e1; font-size: 16px; font-weight: 400; }
.graph { width: 100%; height: 18px; margin-top: auto; }
.area { fill: #33291a; }
.line { fill: none; stroke: #b9751b; stroke-width: 2; }
.sensor-row .stacked { margin: 0; }
.sensor-row .tile { padding-bottom: 0; }
.glance { display: grid; grid-template-columns: repeat(3, 1fr); min-height: 74px; padding: 9px; }
.glance button { display: flex; flex-direction: column; align-items: center; justify-content: space-between; }
.glance svg { width: 14px; height: 14px; color: #44739e; }
.study { padding-top: 4px; min-height: 93px; }
.study .slider { height: 24px; }

/* Calendar */
.calendar { padding: 17px 4px 5px 5px; }
.calendar header, .tools { display: flex; align-items: center; justify-content: space-between; padding: 0 4px; }
.calendar h2 { font-size: 14px; line-height: 20px; }
nav { display: flex; gap: 8px; padding-right: 4px; }
nav svg { width: 12px; height: 12px; }
.tools { height: 22px; margin: 8px 0 7px; }
.today { width: 36px; height: 20px; border: 1px solid #2e2e2e; border-radius: 2px; color: #1ca3ec; font-size: 7px; }
.views { display: flex; height: 22px; border: 1px solid #1583ba; border-radius: 3px; color: #03a9f4; }
.views button { display: grid; place-items: center; width: 20px; }
.views button + button { width: 21px; border-left: 1px solid #1583ba; }
.views svg { width: 10px; height: 10px; }
.views .on { background: #03a9f4; color: #fff; }
table { width: 100%; table-layout: fixed; border-collapse: collapse; font-size: 7px; line-height: 14px; text-align: center; }
th, td { border: 1px solid #2e2e2e; font-weight: 400; }
th { height: 15px; background: #282828; font-weight: 500; }
td { height: 36px; padding-top: 3px; vertical-align: top; }
tr:first-child td { height: 31px; padding-top: 0; }
td.off { color: #606060; }
.current { display: block; width: 14px; height: 14px; margin: 0 auto; border-radius: 50%; background: #03a9f4; color: #fff; }

/* Alerts */
.alerts { display: flex; flex-direction: column; gap: 16px; padding: 11px 9px 10px; }
.alert { display: flex; gap: 5px; min-height: 23px; padding: 5px; border-radius: 2px; font-size: 8px; line-height: 12px; }
.alert svg { width: 13px; height: 13px; }
.alert b { font-weight: 700; }
.error { background: #35201e; }
.error svg { color: #db4437; }
.warning { background: #3a2c17; }
.warning svg { color: #f5a417; }
.note { background: #1a2c36; }
.note svg { color: #0f8fd0; }
.success { background: #212e22; }
.success svg { color: #43a047; }

.watermark {
  position: fixed;
  right: 10px;
  bottom: 10px;
  padding: 0 5px;
  border-radius: 10px;
  background: #545454;
  color: #383838;
  font: 700 11px/21px "Noto Sans CJK SC", sans-serif;
}
```
